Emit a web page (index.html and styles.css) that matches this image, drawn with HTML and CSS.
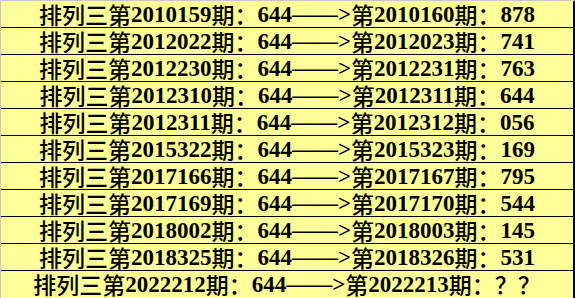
FILE: index.html
```html
<!DOCTYPE html>
<html lang="zh-CN">
<head>
<meta charset="utf-8">
<title>排列三</title>
<link rel="stylesheet" href="styles.css">
</head>
<body>
<div class="sheet">
  <div class="row"><span class="cn">排列三第</span>2010159<span class="cn">期：</span>644——&gt;<span class="cn">第</span>2010160<span class="cn">期：</span>878</div>
  <div class="row"><span class="cn">排列三第</span>2012022<span class="cn">期：</span>644——&gt;<span class="cn">第</span>2012023<span class="cn">期：</span>741</div>
  <div class="row"><span class="cn">排列三第</span>2012230<span class="cn">期：</span>644——&gt;<span class="cn">第</span>2012231<span class="cn">期：</span>763</div>
  <div class="row"><span class="cn">排列三第</span>2012310<span class="cn">期：</span>644——&gt;<span class="cn">第</span>2012311<span class="cn">期：</span>644</div>
  <div class="row"><span class="cn">排列三第</span>2012311<span class="cn">期：</span>644——&gt;<span class="cn">第</span>2012312<span class="cn">期：</span>056</div>
  <div class="row"><span class="cn">排列三第</span>2015322<span class="cn">期：</span>644——&gt;<span class="cn">第</span>2015323<span class="cn">期：</span>169</div>
  <div class="row"><span class="cn">排列三第</span>2017166<span class="cn">期：</span>644——&gt;<span class="cn">第</span>2017167<span class="cn">期：</span>795</div>
  <div class="row"><span class="cn">排列三第</span>2017169<span class="cn">期：</span>644——&gt;<span class="cn">第</span>2017170<span class="cn">期：</span>544</div>
  <div class="row"><span class="cn">排列三第</span>2018002<span class="cn">期：</span>644——&gt;<span class="cn">第</span>2018003<span class="cn">期：</span>145</div>
  <div class="row"><span class="cn">排列三第</span>2018325<span class="cn">期：</span>644——&gt;<span class="cn">第</span>2018326<span class="cn">期：</span>531</div>
  <div class="row"><span class="cn">排列三第</span>2022212<span class="cn">期：</span>644——&gt;<span class="cn">第</span>2022213<span class="cn">期：？？</span></div>
</div>
</body>
</html>
```
FILE: styles.css
```css
html, body {
  margin: 0;
  padding: 0;
  background: #c8c8c8;
}
.sheet {
  padding: 1px 0 0 1px;
  width: 574px;
  height: 297px;
  display: flex;
  flex-direction: column;
}
.row {
  flex: none;
  box-sizing: border-box;
  height: 27px;
  padding-top: 1px;
  line-height: 25px;
  background: #ffff99;
  border-bottom: 1px solid #000;
  border-right: 2px solid #000;
  text-align: center;
  white-space: nowrap;
  font-family: "Liberation Serif", "Noto Sans CJK SC", serif;
  font-weight: 700;
  font-size: 23px;
  color: #000;
}
.row:last-child {
  border-bottom: none;
}
.cn {
  display: inline-block;
  vertical-align: top;
  line-height: 25px;
  font-family: "Noto Sans CJK SC", sans-serif;
  font-weight: 500;
}
```
